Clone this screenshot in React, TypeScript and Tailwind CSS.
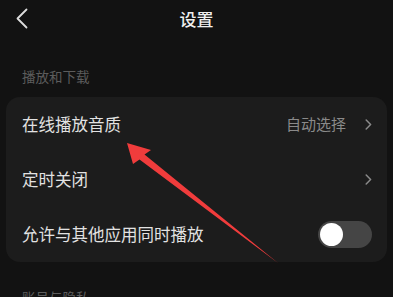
import React from "react";

function Chevron() {
  return (
    <svg width="7" height="11" viewBox="0 0 7 11" fill="none">
      <path d="M1.2 1 L5.6 5.5 L1.2 10" stroke="#8a8a8a" strokeWidth="1.5" strokeLinecap="round" strokeLinejoin="round" />
    </svg>
  );
}

function Toggle() {
  return (
    <div className="w-[54px] h-[27px] rounded-full bg-[#454545] flex items-center px-[2px]">
      <div className="w-[23px] h-[23px] rounded-full bg-white" />
    </div>
  );
}

export default function App() {
  return (
    <div
      className="relative w-[393px] h-[297px] overflow-hidden bg-[#121212] text-[#e2e2e2]"
      style={{ fontFamily: '"Noto Sans CJK SC", "Noto Sans", sans-serif' }}
    >
      {/* header */}
      <div className="grid grid-cols-[1fr_auto_1fr] items-center h-[38px]">
        <div className="pl-[15px] flex items-center">
          <svg width="14" height="22" viewBox="0 0 14 22" fill="none">
            <path d="M11.5 1.5 L2.5 10.5 L11.5 19.5" stroke="#dddddd" strokeWidth="1.8" strokeLinecap="round" strokeLinejoin="round" />
          </svg>
        </div>
        <div className="text-[17px] leading-[22px] font-medium text-[#efefef]">设置</div>
        <div />
      </div>

      <div className="pt-[29px] pl-[22px] text-[13.5px] leading-[18px] text-[#5c5c5c]">播放和下载</div>

      <div className="mx-[6px] mt-[12px] w-[381px] rounded-[14px] bg-[#1c1c1c]">
        <div className="h-[55px] flex items-center justify-between pl-[16px] pr-[15px]">
          <span className="text-[16.5px]">在线播放音质</span>
          <div className="flex items-center gap-[19px]">
            <span className="text-[15px] text-[#8a8a8a]">自动选择</span>
            <Chevron />
          </div>
        </div>
        <div className="h-[55px] flex items-center justify-between pl-[16px] pr-[15px]">
          <span className="text-[16.5px]">定时关闭</span>
          <Chevron />
        </div>
        <div className="h-[55px] flex items-center justify-between pl-[16px] pr-[15px]">
          <span className="text-[16.5px]">允许与其他应用同时播放</span>
          <Toggle />
        </div>
      </div>

      <div className="pt-[26px] pl-[22px] text-[13.5px] leading-[18px] text-[#5c5c5c]">账号与隐私</div>

      {/* annotation arrow */}
      <svg className="absolute inset-0 pointer-events-none" width="393" height="297" viewBox="0 0 393 297">
        <polygon
          points="127,143 151,150 144.5,154.5 278,263 139.5,159.5 133,164"
          fill="#f03c3c"
        />
      </svg>
    </div>
  );
}
